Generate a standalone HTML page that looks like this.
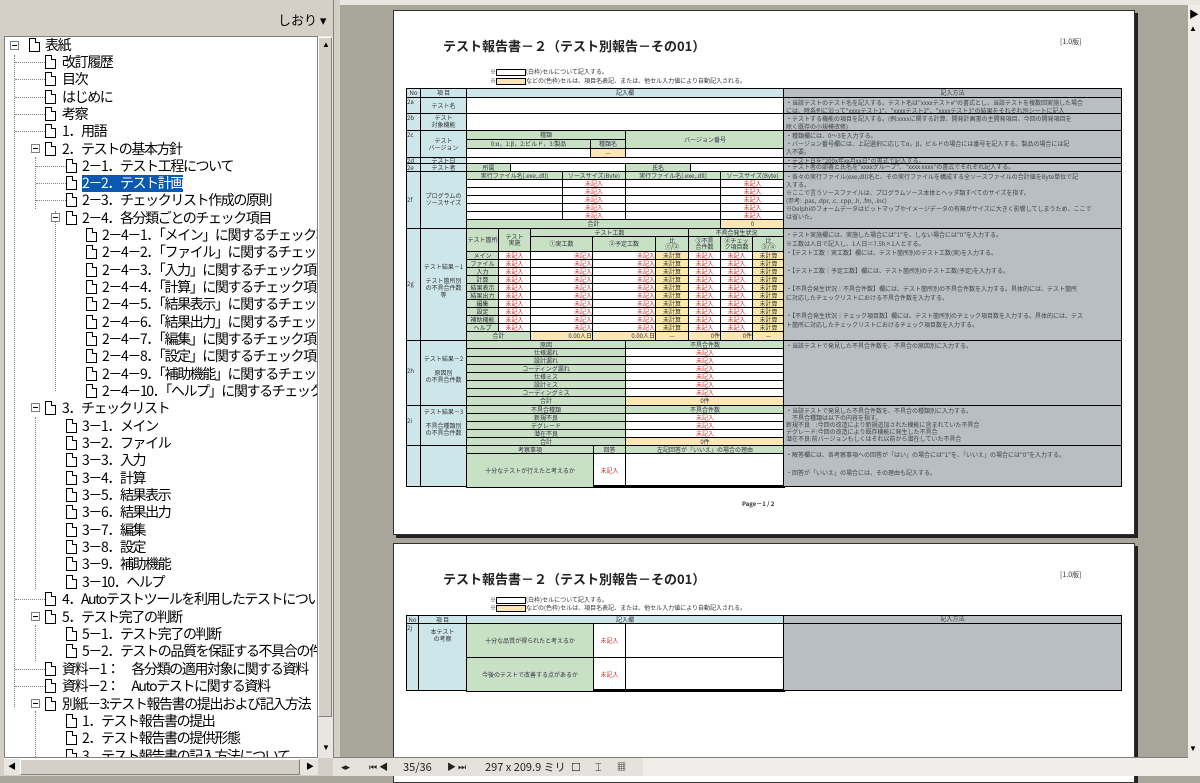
<!DOCTYPE html>
<html><head><meta charset="utf-8">
<style>
*{margin:0;padding:0;box-sizing:border-box}
body{width:1200px;height:776px;overflow:hidden;position:relative;background:#a8a59b;font-family:"Liberation Sans","Noto Sans CJK JP",sans-serif}
.a{position:absolute}
#left{left:0;top:0;width:333px;height:776px;background:#d4d0c8}
#tree{left:4px;top:36px;width:314px;height:722px;background:#fff;border:1px solid #808080;overflow:hidden}
.it{position:absolute;font-size:14px;line-height:17px;white-space:nowrap;color:#000;font-family:"Noto Sans CJK JP",sans-serif;letter-spacing:-1.4px}
.ic{position:absolute;width:11px;height:14px;border:1px solid #000;background:#fff}
.ic:after{content:"";position:absolute;right:-1px;top:-1px;width:4px;height:4px;background:#fff;border-left:1px solid #000;border-bottom:1px solid #000}
.ex{position:absolute;width:9px;height:9px;border:1px solid #808080;background:#fff}
.ex:after{content:"";position:absolute;left:1px;top:3px;width:5px;height:1px;background:#000}
.vl{position:absolute;border-left:1px dotted #808080;width:0}
.hl{position:absolute;border-top:1px dotted #808080;height:0}
.sel{background:#0a58b0;color:#fff}
.t{position:absolute;border-collapse:collapse;table-layout:fixed;font-size:6px;font-family:"Noto Sans CJK JP",sans-serif;color:#334}
.t td{border:1.5px solid #000;padding:0;text-align:center;overflow:hidden;white-space:nowrap;line-height:6px}
.g{background:#c8e0c4}.y{background:#fbe6b4}.r{color:#e02828}.b{background:#cce6ea}
.cell{position:absolute;border:1.5px solid #000;overflow:hidden;font-size:6px;line-height:7px;font-family:"Noto Sans CJK JP",sans-serif;color:#333;text-align:center}
.gr{position:absolute;background:#b8bec2;border:1.5px solid #000;font-size:6px;line-height:8px;font-family:"Noto Sans CJK JP",sans-serif;color:#444;padding:1px 2px;overflow:hidden;white-space:nowrap}
.page{position:absolute;background:#fff;border:1px solid #333;box-shadow:3px 3px 0 #222}
.title{position:absolute;font-size:13px;font-weight:bold;font-family:"Noto Sans CJK JP",sans-serif;color:#222}
.note{position:absolute;font-size:6px;line-height:8px;font-family:"Noto Sans CJK JP",sans-serif;color:#333;white-space:nowrap}
</style></head><body>

<div id="left" class="a">
 <div class="a" style="left:278px;top:10px;font-size:13px;font-family:'Noto Sans CJK JP',sans-serif">しおり ▾</div>
 <div id="tree" class="a">
  <div class="vl" style="left:9px;top:18px;height:652px"></div>
  <div class="vl" style="left:30px;top:120px;height:52px"></div>
  <div class="vl" style="left:50px;top:174px;height:180px"></div>
  <div class="vl" style="left:30px;top:380px;height:172px"></div>
  <div class="vl" style="left:30px;top:588px;height:36px"></div>
  <div class="vl" style="left:30px;top:674px;height:48px"></div>
  <div class="ex" style="left:5px;top:4px"></div>
  <div class="ic" style="left:24px;top:1px"></div><div class="it" style="left:40px;top:0">表紙</div>
  <div class="hl" style="left:10px;top:25px;width:30px"></div><div class="ic" style="left:40px;top:18px"></div><div class="it" style="left:57px;top:17px">改訂履歴</div>
  <div class="hl" style="left:10px;top:42px;width:30px"></div><div class="ic" style="left:40px;top:35px"></div><div class="it" style="left:57px;top:34px">目次</div>
  <div class="hl" style="left:10px;top:60px;width:30px"></div><div class="ic" style="left:40px;top:53px"></div><div class="it" style="left:57px;top:52px">はじめに</div>
  <div class="hl" style="left:10px;top:77px;width:30px"></div><div class="ic" style="left:40px;top:70px"></div><div class="it" style="left:57px;top:69px">考察</div>
  <div class="hl" style="left:10px;top:94px;width:30px"></div><div class="ic" style="left:40px;top:87px"></div><div class="it" style="left:57px;top:86px">1．用語</div>
  <div class="ex" style="left:26px;top:107px"></div><div class="ic" style="left:40px;top:105px"></div><div class="it" style="left:57px;top:104px">2．テストの基本方針</div>
  <div class="hl" style="left:31px;top:129px;width:30px"></div><div class="ic" style="left:61px;top:122px"></div><div class="it" style="left:77px;top:121px">2－1．テスト工程について</div>
  <div class="hl" style="left:31px;top:146px;width:30px"></div><div class="ic" style="left:61px;top:139px"></div><div class="it sel" style="left:77px;top:138px">2－2．テスト計画</div>
  <div class="hl" style="left:31px;top:163px;width:30px"></div><div class="ic" style="left:61px;top:156px"></div><div class="it" style="left:77px;top:155px">2－3．チェックリスト作成の原則</div>
  <div class="ex" style="left:46px;top:176px"></div><div class="ic" style="left:61px;top:174px"></div><div class="it" style="left:77px;top:173px">2－4．各分類ごとのチェック項目</div>
  <div class="ic" style="left:81px;top:191px"></div><div class="it" style="left:97px;top:190px">2－4－1．「メイン」に関するチェック項目</div>
  <div class="ic" style="left:81px;top:208px"></div><div class="it" style="left:97px;top:207px">2－4－2．「ファイル」に関するチェック項目</div>
  <div class="ic" style="left:81px;top:226px"></div><div class="it" style="left:97px;top:225px">2－4－3．「入力」に関するチェック項目</div>
  <div class="ic" style="left:81px;top:243px"></div><div class="it" style="left:97px;top:242px">2－4－4．「計算」に関するチェック項目</div>
  <div class="ic" style="left:81px;top:260px"></div><div class="it" style="left:97px;top:259px">2－4－5．「結果表示」に関するチェック項目</div>
  <div class="ic" style="left:81px;top:278px"></div><div class="it" style="left:97px;top:277px">2－4－6．「結果出力」に関するチェック項目</div>
  <div class="ic" style="left:81px;top:295px"></div><div class="it" style="left:97px;top:294px">2－4－7．「編集」に関するチェック項目</div>
  <div class="ic" style="left:81px;top:312px"></div><div class="it" style="left:97px;top:311px">2－4－8．「設定」に関するチェック項目</div>
  <div class="ic" style="left:81px;top:330px"></div><div class="it" style="left:97px;top:329px">2－4－9．「補助機能」に関するチェック項目</div>
  <div class="ic" style="left:81px;top:347px"></div><div class="it" style="left:97px;top:346px">2－4－10．「ヘルプ」に関するチェック項目</div>
  <div class="ex" style="left:26px;top:366px"></div><div class="ic" style="left:40px;top:364px"></div><div class="it" style="left:57px;top:363px">3．チェックリスト</div>
  <div class="ic" style="left:61px;top:382px"></div><div class="it" style="left:77px;top:381px">3－1．メイン</div>
  <div class="ic" style="left:61px;top:399px"></div><div class="it" style="left:77px;top:398px">3－2．ファイル</div>
  <div class="ic" style="left:61px;top:416px"></div><div class="it" style="left:77px;top:415px">3－3．入力</div>
  <div class="ic" style="left:61px;top:434px"></div><div class="it" style="left:77px;top:433px">3－4．計算</div>
  <div class="ic" style="left:61px;top:451px"></div><div class="it" style="left:77px;top:450px">3－5．結果表示</div>
  <div class="ic" style="left:61px;top:468px"></div><div class="it" style="left:77px;top:467px">3－6．結果出力</div>
  <div class="ic" style="left:61px;top:486px"></div><div class="it" style="left:77px;top:485px">3－7．編集</div>
  <div class="ic" style="left:61px;top:503px"></div><div class="it" style="left:77px;top:502px">3－8．設定</div>
  <div class="ic" style="left:61px;top:520px"></div><div class="it" style="left:77px;top:519px">3－9．補助機能</div>
  <div class="ic" style="left:61px;top:538px"></div><div class="it" style="left:77px;top:537px">3－10．ヘルプ</div>
  <div class="hl" style="left:10px;top:562px;width:30px"></div><div class="ic" style="left:40px;top:555px"></div><div class="it" style="left:57px;top:554px">4．Autoテストツールを利用したテストについて</div>
  <div class="ex" style="left:26px;top:575px"></div><div class="ic" style="left:40px;top:573px"></div><div class="it" style="left:57px;top:572px">5．テスト完了の判断</div>
  <div class="ic" style="left:61px;top:590px"></div><div class="it" style="left:77px;top:589px">5－1．テスト完了の判断</div>
  <div class="ic" style="left:61px;top:607px"></div><div class="it" style="left:77px;top:606px">5－2．テストの品質を保証する不具合の件数</div>
  <div class="hl" style="left:10px;top:632px;width:30px"></div><div class="ic" style="left:40px;top:625px"></div><div class="it" style="left:57px;top:624px">資料－1：　各分類の適用対象に関する資料</div>
  <div class="hl" style="left:10px;top:649px;width:30px"></div><div class="ic" style="left:40px;top:642px"></div><div class="it" style="left:57px;top:641px">資料－2：　Autoテストに関する資料</div>
  <div class="ex" style="left:26px;top:662px"></div><div class="ic" style="left:40px;top:660px"></div><div class="it" style="left:57px;top:659px">別紙－3:テスト報告書の提出および記入方法</div>
  <div class="ic" style="left:61px;top:677px"></div><div class="it" style="left:77px;top:676px">1．テスト報告書の提出</div>
  <div class="ic" style="left:61px;top:694px"></div><div class="it" style="left:77px;top:693px">2．テスト報告書の提供形態</div>
  <div class="ic" style="left:61px;top:712px"></div><div class="it" style="left:77px;top:711px">3．テスト報告書の記入方法について</div>
 </div>
 <div class="a" style="left:318px;top:36px;width:15px;height:722px;background:#e8e6e0"></div>
 <div class="a" style="left:318px;top:37px;width:14px;height:680px;background:#d4d0c8;border:1px solid #fff;border-right-color:#808080;border-bottom-color:#808080"></div>
 <div class="a" style="left:322px;top:40px;font-size:8px">▲</div>
 <div class="a" style="left:322px;top:743px;font-size:8px">▼</div>
 <div class="a" style="left:4px;top:758px;width:314px;height:17px;background:#e8e6e0;border-top:1px solid #fff"></div>
 <div class="a" style="left:20px;top:759px;width:280px;height:16px;background:#d4d0c8;border:1px solid #fff;border-right-color:#808080;border-bottom-color:#808080"></div>
 <div class="a" style="left:8px;top:761px;font-size:8px">◀</div>
 <div class="a" style="left:306px;top:761px;font-size:8px">▶</div>
</div>
<div class="a" style="left:333px;top:0;width:7px;height:776px;background:#d4d0c8;border-left:1px solid #808080"></div>
<div class="a" style="left:340px;top:0;width:860px;height:5px;background:#e8e6e0"></div>
<div class="a" style="left:1188px;top:5px;width:12px;height:771px;background:#efeee8"></div>
<div class="a" style="left:1189px;top:6px;font-size:10px">▶</div>
<div class="a" style="left:1189px;top:24px;font-size:8px">▲</div>
<div class="a" style="left:1189px;top:744px;font-size:8px">▼</div>

<!-- PAGE 1 -->
<div class="page" style="left:393px;top:10px;width:742px;height:525px"></div>
<div class="title" style="left:443px;top:36px">テスト報告書－２（テスト別報告－その01）</div>
<div class="note" style="left:1060px;top:38px;font-size:7px">[1.0版]</div>
<div class="note" style="left:490px;top:68px">※<span style="display:inline-block;width:30px;height:7px;border:1.5px solid #000;vertical-align:middle"></span>(白枠)セルについて記入する。</div>
<div class="note" style="left:490px;top:77px">※<span style="display:inline-block;width:30px;height:7px;border:1.5px solid #000;background:#fbe6b4;vertical-align:middle"></span>などの(色枠)セルは、項目名表記、または、他セル入力値により自動記入される。</div>

<div class="a" style="left:406px;top:88px;width:716px;height:399px;border:2px solid #000;background:#fff"></div>
<div class="cell b" style="left:406px;top:88px;width:15px;height:10px">No</div>
<div class="cell b" style="left:420px;top:88px;width:47px;height:10px">項 目</div>
<div class="cell b" style="left:466px;top:88px;width:318px;height:10px">記入欄</div>
<div class="gr" style="left:783px;top:88px;width:339px;height:10px;text-align:center;line-height:7px;padding:0">記入方法</div>
<div class="cell b" style="left:406px;top:97px;width:15px;height:17px;text-align:left">2a</div><div class="cell b" style="left:420px;top:97px;width:47px;height:17px;line-height:15px">テスト名</div>
<div class="cell b" style="left:406px;top:113px;width:15px;height:18px;text-align:left">2b</div><div class="cell b" style="left:420px;top:113px;width:47px;height:18px">テスト<br>対象機能</div>
<div class="cell b" style="left:406px;top:130px;width:15px;height:28px;text-align:left">2c</div><div class="cell b" style="left:420px;top:130px;width:47px;height:28px;padding-top:6px">テスト<br>バージョン</div>
<div class="cell b" style="left:406px;top:157px;width:15px;height:7px;line-height:5px;text-align:left">2d</div><div class="cell b" style="left:420px;top:157px;width:47px;height:7px;line-height:5px">テスト日</div>
<div class="cell b" style="left:406px;top:163px;width:15px;height:9px;line-height:7px;text-align:left">2e</div><div class="cell b" style="left:420px;top:163px;width:47px;height:9px;line-height:7px">テスト者</div>
<div class="cell b" style="left:406px;top:171px;width:15px;height:58px;line-height:56px;text-align:left">2f</div><div class="cell b" style="left:420px;top:171px;width:47px;height:58px;padding-top:20px">プログラムの<br>ソースサイズ</div>
<div class="cell b" style="left:406px;top:228px;width:15px;height:113px;line-height:110px;text-align:left">2g</div><div class="cell b" style="left:420px;top:228px;width:47px;height:113px;padding-top:34px">テスト結果－1<br><br>テスト箇所別<br>の不具合件数<br>等</div>
<div class="cell b" style="left:406px;top:340px;width:15px;height:66px;line-height:60px;text-align:left">2h</div><div class="cell b" style="left:420px;top:340px;width:47px;height:66px;padding-top:14px">テスト結果－2<br><br>原因別<br>の不具合件数</div>
<div class="cell b" style="left:406px;top:405px;width:15px;height:41px;line-height:30px;text-align:left">2i</div><div class="cell b" style="left:420px;top:405px;width:47px;height:41px;padding-top:2px">テスト結果－3<br><br>不具合種類別<br>の不具合件数</div>
<div class="cell b" style="left:406px;top:445px;width:15px;height:42px"></div><div class="cell b" style="left:420px;top:445px;width:47px;height:42px"></div>
<div class="cell" style="left:466px;top:97px;width:318px;height:17px;background:#fff"></div>
<div class="cell" style="left:466px;top:113px;width:318px;height:18px;background:#fff"></div>
<div class="cell" style="left:466px;top:157px;width:318px;height:7px;background:#fff"></div>
<table class="t" style="left:466px;top:130px;width:318px"><colgroup><col style="width:124px"><col style="width:35px"><col style="width:159px"></colgroup>
<tr style="height:9px"><td class="g" colspan="2">種類</td><td class="g" rowspan="2">バージョン番号</td></tr>
<tr style="height:9px"><td class="g">0:α，1:β，2:ビルド，3:製品</td><td class="g">種類名</td></tr>
<tr style="height:9px"><td></td><td class="y">—</td><td></td></tr></table>
<table class="t" style="left:466px;top:163px;width:318px"><colgroup><col style="width:44px"><col style="width:115px"><col style="width:65px"><col style="width:94px"></colgroup>
<tr style="height:9px"><td class="g">所属</td><td></td><td class="g">氏名</td><td></td></tr></table>
<table class="t" style="left:466px;top:171px;width:318px"><colgroup><col style="width:96px"><col style="width:63px"><col style="width:95px"><col style="width:64px"></colgroup>
<tr style="height:8px"><td class="g">実行ファイル名[.exe,.dll]</td><td class="g">ソースサイズ(Byte)</td><td class="g">実行ファイル名[.exe,.dll]</td><td class="g">ソースサイズ(Byte)</td></tr>
<tr style="height:8px"><td></td><td class="r">未記入</td><td></td><td class="r">未記入</td></tr>
<tr style="height:8px"><td></td><td class="r">未記入</td><td></td><td class="r">未記入</td></tr>
<tr style="height:8px"><td></td><td class="r">未記入</td><td></td><td class="r">未記入</td></tr>
<tr style="height:8px"><td></td><td class="r">未記入</td><td></td><td class="r">未記入</td></tr>
<tr style="height:8px"><td></td><td class="r">未記入</td><td></td><td class="r">未記入</td></tr>
<tr style="height:9px"><td class="g" colspan="3">合計</td><td class="y">0</td></tr></table>
<table class="t" style="left:466px;top:228px;width:318px"><colgroup><col style="width:32px"><col style="width:32px"><col style="width:62px"><col style="width:63px"><col style="width:33px"><col style="width:32px"><col style="width:32px"><col style="width:32px"></colgroup>
<tr style="height:8px"><td class="g" rowspan="2">テスト箇所</td><td class="g" rowspan="2">テスト<br>実施</td><td class="g" colspan="3">テスト工数</td><td class="g" colspan="3">不具合発生状況</td></tr>
<tr style="height:15px"><td class="g">①実工数</td><td class="g">②予定工数</td><td class="g">比<br>①/②</td><td class="g">③不具<br>合件数</td><td class="g">④チェッ<br>ク項目数</td><td class="g">比<br>③/④</td></tr>
<tr style="height:8px"><td class="g">メイン</td><td class="r">未記入</td><td class="r" style="text-align:right">未記入</td><td class="r" style="text-align:right">未記入</td><td class="y">未計算</td><td class="r">未記入</td><td class="r">未記入</td><td class="y">未計算</td></tr>
<tr style="height:8px"><td class="g">ファイル</td><td class="r">未記入</td><td class="r" style="text-align:right">未記入</td><td class="r" style="text-align:right">未記入</td><td class="y">未計算</td><td class="r">未記入</td><td class="r">未記入</td><td class="y">未計算</td></tr>
<tr style="height:8px"><td class="g">入力</td><td class="r">未記入</td><td class="r" style="text-align:right">未記入</td><td class="r" style="text-align:right">未記入</td><td class="y">未計算</td><td class="r">未記入</td><td class="r">未記入</td><td class="y">未計算</td></tr>
<tr style="height:8px"><td class="g">計算</td><td class="r">未記入</td><td class="r" style="text-align:right">未記入</td><td class="r" style="text-align:right">未記入</td><td class="y">未計算</td><td class="r">未記入</td><td class="r">未記入</td><td class="y">未計算</td></tr>
<tr style="height:8px"><td class="g">結果表示</td><td class="r">未記入</td><td class="r" style="text-align:right">未記入</td><td class="r" style="text-align:right">未記入</td><td class="y">未計算</td><td class="r">未記入</td><td class="r">未記入</td><td class="y">未計算</td></tr>
<tr style="height:8px"><td class="g">結果出力</td><td class="r">未記入</td><td class="r" style="text-align:right">未記入</td><td class="r" style="text-align:right">未記入</td><td class="y">未計算</td><td class="r">未記入</td><td class="r">未記入</td><td class="y">未計算</td></tr>
<tr style="height:8px"><td class="g">編集</td><td class="r">未記入</td><td class="r" style="text-align:right">未記入</td><td class="r" style="text-align:right">未記入</td><td class="y">未計算</td><td class="r">未記入</td><td class="r">未記入</td><td class="y">未計算</td></tr>
<tr style="height:8px"><td class="g">設定</td><td class="r">未記入</td><td class="r" style="text-align:right">未記入</td><td class="r" style="text-align:right">未記入</td><td class="y">未計算</td><td class="r">未記入</td><td class="r">未記入</td><td class="y">未計算</td></tr>
<tr style="height:8px"><td class="g">補助機能</td><td class="r">未記入</td><td class="r" style="text-align:right">未記入</td><td class="r" style="text-align:right">未記入</td><td class="y">未計算</td><td class="r">未記入</td><td class="r">未記入</td><td class="y">未計算</td></tr>
<tr style="height:8px"><td class="g">ヘルプ</td><td class="r">未記入</td><td class="r" style="text-align:right">未記入</td><td class="r" style="text-align:right">未記入</td><td class="y">未計算</td><td class="r">未記入</td><td class="r">未記入</td><td class="y">未計算</td></tr>
<tr style="height:9px"><td class="g" colspan="2">合計</td><td class="y" style="text-align:right">0.00人日</td><td class="y" style="text-align:right">0.00人日</td><td class="y">—</td><td class="y" style="text-align:right">0件</td><td class="y" style="text-align:right">0件</td><td class="y">—</td></tr></table>
<table class="t" style="left:466px;top:340px;width:318px"><colgroup><col style="width:159px"><col style="width:159px"></colgroup>
<tr style="height:8px"><td class="g">原因</td><td class="g">不具合件数</td></tr>
<tr style="height:8px"><td class="g">仕様漏れ</td><td class="r">未記入</td></tr>
<tr style="height:8px"><td class="g">設計漏れ</td><td class="r">未記入</td></tr>
<tr style="height:8px"><td class="g">コーディング漏れ</td><td class="r">未記入</td></tr>
<tr style="height:8px"><td class="g">仕様ミス</td><td class="r">未記入</td></tr>
<tr style="height:8px"><td class="g">設計ミス</td><td class="r">未記入</td></tr>
<tr style="height:8px"><td class="g">コーディングミス</td><td class="r">未記入</td></tr>
<tr style="height:9px"><td class="g">合計</td><td class="y">0件</td></tr></table>
<table class="t" style="left:466px;top:405px;width:318px"><colgroup><col style="width:159px"><col style="width:159px"></colgroup>
<tr style="height:8px"><td class="g">不具合種類</td><td class="g">不具合件数</td></tr>
<tr style="height:8px"><td class="g">新規不良</td><td class="r">未記入</td></tr>
<tr style="height:8px"><td class="g">デグレード</td><td class="r">未記入</td></tr>
<tr style="height:8px"><td class="g">潜在不良</td><td class="r">未記入</td></tr>
<tr style="height:8px"><td class="g">合計</td><td class="y">0件</td></tr></table>
<table class="t" style="left:466px;top:445px;width:318px"><colgroup><col style="width:127px"><col style="width:32px"><col style="width:159px"></colgroup>
<tr style="height:8px"><td class="g">考察事項</td><td class="g">回答</td><td class="g">左記回答が「いいえ」の場合の理由</td></tr>
<tr style="height:34px"><td class="g">十分なテストが行えたと考えるか</td><td class="r">未記入</td><td></td></tr></table>
<div class="gr" style="left:783px;top:97px;width:339px;height:17px">・当該テストのテスト名を記入する。テスト名は"xxxxテスト#"の書式とし、当該テストを複数回実施した場合<br>には、時系列に沿って"xxxxテスト1"、"xxxxテスト2"、"xxxxテスト3"の結果をそれぞれ別シートに記入</div>
<div class="gr" style="left:783px;top:113px;width:339px;height:18px">・テストする機能の項目を記入する。(例:xxxxに関する計算、開発計画書の主開発項目、今回の開発項目を<br>除く既存の小規模改修)</div>
<div class="gr" style="left:783px;top:130px;width:339px;height:28px">・種類欄には、0～3を入力する。<br>・バージョン番号欄には、上記選択に応じてα，β，ビルドの場合には番号を記入する。製品の場合には記<br>入不要。</div>
<div class="gr" style="left:783px;top:157px;width:339px;height:7px;line-height:5px;padding-top:0">・テスト日を"200x年xx月xx日"の書式で記入する。</div>
<div class="gr" style="left:783px;top:163px;width:339px;height:9px;line-height:6px;padding-top:0">・テスト者の部署と氏名を"xxxxグループ"、"xxxx xxxx"の書式でそれぞれ記入する。</div>
<div class="gr" style="left:783px;top:171px;width:339px;height:58px">・各々の実行ファイル(exe,dll)名と、その実行ファイルを構成する全ソースファイルの合計値をByte単位で記<br>入する。<br>※ここで言うソースファイルは、プログラムソース本体とヘッダ類すべてのサイズを指す。<br>(参考: .pas, .dpr, .c, .cpp, .h, .fm, .inc)<br>※Delphiのフォームデータはビットマップやイメージデータの有無がサイズに大きく影響してしまうため、ここで<br>は省いた。</div>
<div class="gr" style="left:783px;top:228px;width:339px;height:113px;line-height:9px">・テスト実施欄には、実施した場合には"1"を、しない場合には"0"を入力する。<br>※工数は人日で記入し、1人日＝7.5h×1人とする。<br>・【テスト工数｜実工数】欄には、テスト箇所別のテスト工数(実)を入力する。<br><br>・【テスト工数｜予定工数】欄には、テスト箇所別のテスト工数(予定)を入力する。<br><br>・【不具合発生状況｜不具合件数】欄には、テスト箇所別の不具合件数を入力する。具体的には、テスト箇所<br>に対応したチェックリストにおける不具合件数を入力する。<br><br>・【不具合発生状況｜チェック項目数】欄には、テスト箇所別のチェック項目数を入力する。具体的には、テス<br>ト箇所に対応したチェックリストにおけるチェック項目数を入力する。</div>
<div class="gr" style="left:783px;top:340px;width:339px;height:66px">・当該テストで発見した不具合件数を、不具合の原因別に入力する。</div>
<div class="gr" style="left:783px;top:405px;width:339px;height:41px;line-height:7px">・当該テストで発見した不具合件数を、不具合の種類別に入力する。<br>　不具合種類は以下の内容を指す。<br>新規不良　:今回の改造により新規追加された機能に含まれていた不具合<br>デグレード:今回の改造により既存機能に発生した不具合<br>潜在不良:前バージョンもしくはそれ以前から潜在していた不具合</div>
<div class="gr" style="left:783px;top:445px;width:339px;height:42px;line-height:9px;padding-top:4px">・解答欄には、各考察事項への回答が「はい」の場合には"1"を、「いいえ」の場合には"0"を入力する。<br><br>・回答が「いいえ」の場合には、その理由も記入する。</div>
<div class="note" style="left:742px;top:500px;font-weight:bold">Page－1 / 2</div>

<!-- PAGE 2 -->
<div class="page" style="left:393px;top:543px;width:742px;height:240px"></div>
<div class="title" style="left:443px;top:569px">テスト報告書－２（テスト別報告－その01）</div>
<div class="note" style="left:1060px;top:571px;font-size:7px">[1.0版]</div>
<div class="note" style="left:490px;top:596px">※<span style="display:inline-block;width:30px;height:7px;border:1.5px solid #000;vertical-align:middle"></span>(白枠)セルについて記入する。</div>
<div class="note" style="left:490px;top:604px">※<span style="display:inline-block;width:30px;height:7px;border:1.5px solid #000;background:#fbe6b4;vertical-align:middle"></span>などの(色枠)セルは、項目名表記、または、他セル入力値により自動記入される。</div>
<div class="a" style="left:406px;top:615px;width:716px;height:76px;border:2px solid #000;background:#fff"></div>
<div class="cell b" style="left:406px;top:615px;width:13px;height:9px">No</div>
<div class="cell b" style="left:418px;top:615px;width:49px;height:9px">項 目</div>
<div class="cell b" style="left:466px;top:615px;width:318px;height:9px">記入欄</div>
<div class="gr" style="left:783px;top:615px;width:339px;height:9px;text-align:center;line-height:6px;padding:0">記入方法</div>
<div class="cell b" style="left:406px;top:623px;width:13px;height:68px;text-align:left">2j</div>
<div class="cell b" style="left:418px;top:623px;width:49px;height:68px;padding-top:4px">本テスト<br>の考察</div>
<table class="t" style="left:466px;top:623px;width:318px"><colgroup><col style="width:127px"><col style="width:32px"><col style="width:159px"></colgroup>
<tr style="height:34px"><td class="g">十分な品質が得られたと考えるか</td><td class="r">未記入</td><td></td></tr>
<tr style="height:34px"><td class="g">今後のテストで改善する点があるか</td><td class="r">未記入</td><td></td></tr></table>
<div class="gr" style="left:783px;top:623px;width:339px;height:68px"></div>

<div class="a" style="left:333px;top:757px;width:855px;height:19px;background:#efeee8;border-top:1px solid #808080"></div>
<div class="a" style="left:333px;top:758px;width:310px;height:18px;background:#e4e2da;font-size:11px;line-height:18px;font-family:'Noto Sans CJK JP',sans-serif;color:#222;white-space:nowrap">
 <span class="a" style="left:8px;font-size:9px">◂▸</span>
 <span class="a" style="left:36px;font-size:9px">⏮ ◀</span>
 <span class="a" style="left:70px">35/36</span>
 <span class="a" style="left:114px;font-size:9px">▶ ⏭</span>
 <span class="a" style="left:152px">297 x 209.9 ミリ</span>
 <span class="a" style="left:238px">☐</span>
 <span class="a" style="left:262px">⌶</span>
 <span class="a" style="left:284px;font-size:9px">▦</span>
</div>
</body></html>
